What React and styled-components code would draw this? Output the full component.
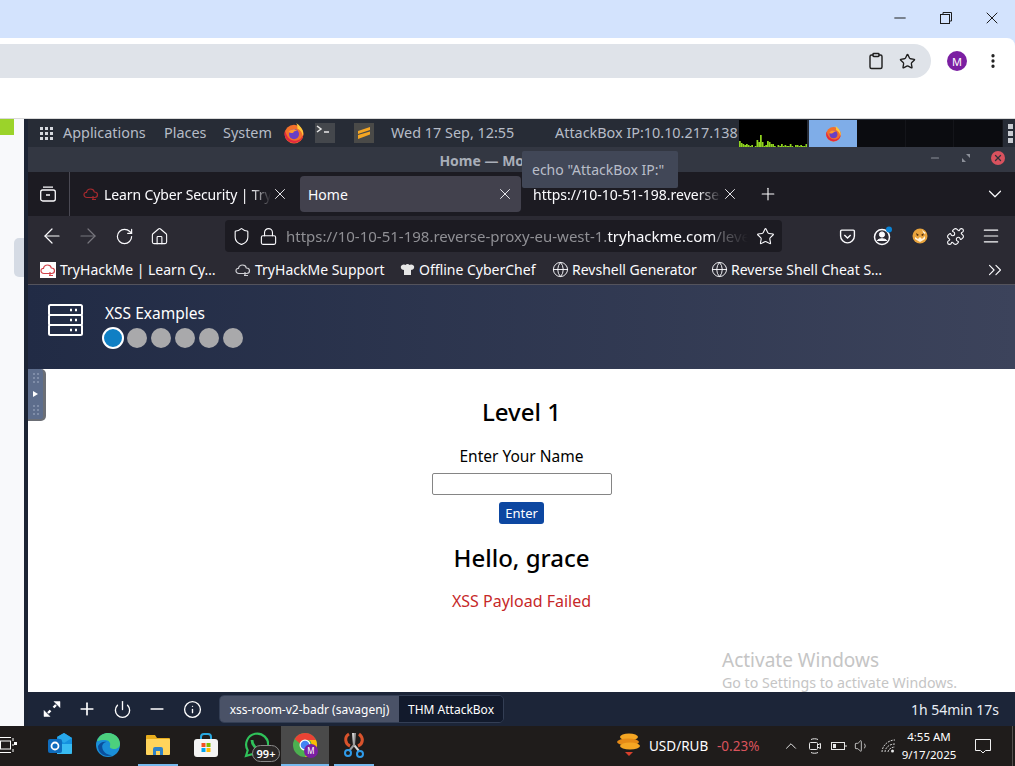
import styled, { createGlobalStyle } from "styled-components"
import {
    ArrowLeft, ArrowRight, RotateCw, Home as HomeIcon, Shield, Lock, Star, Menu, Puzzle, ChevronDown,
    ChevronUp, ChevronsRight, Plus, X, Globe, Power, Minus, Info, Clipboard, MoreVertical, Volume1,
} from "lucide-react"

const Global = createGlobalStyle`
    html, body { margin: 0; padding: 0; background: #fff; overflow: hidden; }
    * { box-sizing: border-box; }
    svg { flex: none; }
    #root { width: 1015px; height: 766px; font-family: "Noto Sans", "Liberation Sans", sans-serif; }
`

const Screen = styled.div`
    position: relative;
    width: 1015px;
    height: 766px;
    display: flex;
    flex-direction: column;
    overflow: hidden;
`

/* outer chrome window */
const ChromeTitle = styled.div`
    height: 38px;
    background: #d3e3fd;
    display: flex;
    justify-content: flex-end;
`
const WinButton = styled.div`
    width: 46px;
    height: 36px;
    display: flex;
    align-items: center;
    justify-content: center;
    color: #1c1c1c;
`
const ChromeBar = styled.div`
    height: 40px;
    background: #d3e3fd;
`
const ChromeBarInner = styled.div`
    height: 40px;
    background: #fff;
    border-top-right-radius: 8px;
    padding-top: 6px;
    display: flex;
    align-items: center;
`
const Omnibox = styled.div`
    width: 931px;
    height: 34px;
    background: #dfe3e9;
    border-radius: 0 17px 17px 0;
    display: flex;
    align-items: center;
    justify-content: flex-end;
    gap: 14px;
    padding-right: 15px;
    color: #1f1f1f;
`
const Avatar = styled.div`
    width: 20px;
    height: 20px;
    margin-left: 16px;
    border-radius: 50%;
    background: #7b1fa2;
    color: #fff;
    font-size: 11px;
    display: flex;
    align-items: center;
    justify-content: center;
`
const Dots = styled.div`
    margin-left: 17px;
    color: #1f1f1f;
    display: flex;
`
const WhiteGap = styled.div`
    height: 41px;
    background: #fff;
    border-bottom: 1px solid #d9d9d9;
`

const Middle = styled.div`
    height: 607px;
    display: flex;
`
const LeftRail = styled.div`
    width: 24px;
    background: #f8f9fb;
    display: flex;
    flex-direction: column;
`
const GreenBlock = styled.div`
    width: 14px;
    height: 16px;
    background: #9bd32a;
`
const RailThumb = styled.div`
    width: 10px;
    height: 39px;
    margin: 103px 0 0 14px;
    background: #d5dbe4;
    border-radius: 5px 0 0 5px;
`
const Remote = styled.div`
    position: relative;
    width: 991px;
    border-left: 4px solid #1c2434;
    display: flex;
    flex-direction: column;
`

/* gnome panel */
const Panel = styled.div`
    height: 28px;
    background: #272c36;
    color: #b6bcc7;
    font-size: 14.4px;
    display: flex;
    align-items: center;
`
const PanelText = styled.span`
    margin-left: ${({ $ml }) => $ml}px;
    width: ${({ $w }) => $w}px;
    white-space: nowrap;
    flex: none;
    line-height: 28px;
`
const AppGrid = styled.div`
    margin-left: 12px;
    width: 13px;
    height: 13px;
    display: grid;
    grid-template-columns: repeat(3, 3px);
    grid-auto-rows: 3px;
    gap: 2px;
    flex: none;
    & > i { background: #d5d8de; }
`
const PanelIcon = styled.div`
    width: 20px;
    height: 20px;
    margin-left: ${({ $ml }) => $ml}px;
    flex: none;
    display: flex;
    align-items: center;
    justify-content: center;
    background: ${({ $bg }) => $bg || "transparent"};
`
const Graph = styled.div`
    width: 68px;
    height: 27px;
    margin: 1px 0 0 2px;
    background: #000;
    flex: none;
`
const ActiveTask = styled.div`
    width: 48px;
    height: 27px;
    margin: 1px 0 0 2px;
    background: #7fade8;
    display: flex;
    align-items: center;
    justify-content: center;
    flex: none;
`
const Workspaces = styled.div`
    width: 146px;
    height: 27px;
    margin-top: 1px;
    background: #0b0c10;
    flex: none;
    display: grid;
    grid-template-columns: repeat(3, 1fr);
    & > i { border-right: 1px solid #14151a; }
`
const Handle = styled.div`
    width: 12px;
    flex: none;
    display: flex;
    flex-direction: column;
    align-items: flex-end;
    justify-content: center;
    gap: 2px;
    padding-right: 2px;
    & > i { display: block; width: 5px; height: 5px; background: #c9ccd2; }
`

/* firefox window */
const FirefoxTitle = styled.div`
    height: 25px;
    padding-top: 2px;
    background: #333742;
    color: #a9aeb8;
    font-size: 14px;
    font-weight: 700;
    display: flex;
    align-items: center;
    justify-content: center;
    position: relative;
`
const WmButtons = styled.div`
    position: absolute;
    right: 10px;
    top: 4px;
    display: flex;
    align-items: center;
    gap: 20px;
`
const WmClose = styled.div`
    width: 14px;
    height: 14px;
    border-radius: 50%;
    background: #d9525e;
    color: #33333a;
    display: flex;
    align-items: center;
    justify-content: center;
`
const TabStrip = styled.div`
    height: 44px;
    background: #1c1b22;
    color: #fbfbfe;
    font-size: 14px;
    display: flex;
    align-items: center;
`
const TabListBtn = styled.div`
    width: 42px;
    height: 44px;
    padding-right: 2px;
    border-right: 1px solid #4a4953;
    display: flex;
    align-items: center;
    justify-content: center;
    margin-right: 1px;
    flex: none;
`
const Tab = styled.div`
    width: ${({ $w }) => $w}px;
    height: 36px;
    padding: 0 ${({ $pr }) => $pr}px 0 ${({ $pl }) => $pl}px;
    display: flex;
    align-items: center;
    border-radius: 4px;
    background: ${({ $active }) => ($active ? "#42414d" : "transparent")};
    flex: none;
`
const TabLabel = styled.span`
    flex: 1;
    min-width: 0;
    margin-left: ${({ $ml }) => $ml || 0}px;
    overflow: hidden;
    white-space: nowrap;
    letter-spacing: ${({ $tight }) => ($tight ? "-0.12px" : "0")};
    -webkit-mask-image: ${({ $fade }) => ($fade ? "linear-gradient(to right, #000 88%, transparent)" : "none")};
`
const NewTab = styled.div`
    margin-left: ${({ $ml }) => $ml}px;
    display: flex;
    flex: none;
`
const NavBar = styled.div`
    height: 36px;
    padding-top: 4px;
    background: #2b2a33;
    color: #fbfbfe;
    display: flex;
    align-items: center;
`
const NavBtn = styled.div`
    width: 18px;
    height: 18px;
    margin-left: ${({ $ml }) => $ml}px;
    display: flex;
    align-items: center;
    justify-content: center;
    flex: none;
    color: ${({ $dim }) => ($dim ? "#77767e" : "inherit")};
`
const UrlBar = styled.div`
    width: 557px;
    height: 32px;
    margin-left: 57px;
    padding: 0 7px;
    background: #1c1b22;
    border-radius: 4px;
    display: flex;
    align-items: center;
    font-size: 15px;
    color: #8f8f94;
    flex: none;
    gap: 8px;
`
const UrlText = styled.div`
    flex: 1;
    min-width: 0;
    white-space: nowrap;
    overflow: hidden;
    -webkit-mask-image: linear-gradient(to right, #000 92%, transparent);
    & > b { font-weight: 400; color: #fbfbfe; }
`
const Bookmarks = styled.div`
    height: 33px;
    padding-top: 3px;
    background: #2b2a33;
    border-bottom: 1px solid #54535c;
    color: #fbfbfe;
    font-size: 14px;
    display: flex;
    align-items: center;
`
const Bookmark = styled.div`
    margin-left: ${({ $ml }) => $ml}px;
    width: ${({ $w }) => $w}px;
    display: flex;
    align-items: center;
    gap: 4px;
    white-space: nowrap;
    flex: none;
`
const Favicon = styled.div`
    width: 16px;
    height: 16px;
    background: ${({ $bg }) => $bg || "transparent"};
    display: flex;
    align-items: center;
    justify-content: center;
    flex: none;
`

/* page */
const PageHeader = styled.div`
    height: 84px;
    background: linear-gradient(to right, #212b45, #3c435b);
    display: flex;
    padding: 18px 0 0 20px;
    color: #fff;
`
const Levels = styled.div`
    margin-left: 21px;
    display: flex;
    flex-direction: column;
`
const HeaderTitle = styled.div`
    font-size: 15.5px;
    line-height: 20px;
    height: 25px;
`
const DotRow = styled.div`
    display: flex;
    gap: 4px;
    margin-left: -2px;
`
const LevelDot = styled.div`
    width: 20px;
    height: 20px;
    border-radius: 50%;
    background: ${({ $active }) => ($active ? "#0f7fc4" : "#a9a9ab")};
    outline: ${({ $active }) => ($active ? "2px solid #fff" : "none")};
    outline-offset: -1px;
`
const Content = styled.div`
    flex: 1;
    background: #fff;
    display: flex;
    flex-direction: column;
    align-items: center;
    color: #000;
`
const Heading = styled.h1`
    margin: ${({ $mt }) => $mt}px 0 0;
    font-size: 24px;
    line-height: 32px;
    font-weight: 500;
`
const NameLabel = styled.label`
    margin-top: 16px;
    font-size: 15.5px;
    line-height: 24px;
`
const NameInput = styled.input`
    width: 180px;
    height: 22px;
    margin-top: 5px;
    border: 1px solid #858585;
    border-radius: 2px;
    background: #fff;
`
const EnterButton = styled.button`
    width: 45px;
    height: 22px;
    margin-top: 7px;
    padding: 0;
    border: none;
    border-radius: 3px;
    background: #0d47a1;
    color: #fff;
    font: 13px "Noto Sans", sans-serif;
`
const Failed = styled.p`
    margin: 15px 0 0;
    font-size: 16px;
    line-height: 24px;
    color: #c62828;
`
const BottomBar = styled.div`
    height: 34px;
    background: #1c2538;
    color: #fff;
    display: flex;
    align-items: center;
`
const BarIcon = styled.div`
    width: 20px;
    height: 20px;
    margin-left: ${({ $ml }) => $ml}px;
    display: flex;
    align-items: center;
    justify-content: center;
    flex: none;
`
const MachineTabs = styled.div`
    width: 285px;
    height: 28px;
    margin-left: 17px;
    border: 1px solid #333e54;
    border-radius: 5px;
    display: flex;
    font-size: 12px;
    overflow: hidden;
    flex: none;
`
const MachineTab = styled.div`
    width: ${({ $w }) => $w}px;
    background: ${({ $active }) => ($active ? "#4a5267" : "#121a2c")};
    display: flex;
    align-items: center;
    justify-content: center;
    white-space: nowrap;
`
const Timer = styled.div`
    margin-left: auto;
    padding-right: 16px;
    font-size: 14px;
    color: #e8edf5;
`

/* overlays */
const Tooltip = styled.div`
    position: absolute;
    left: 494px;
    top: 32px;
    width: 156px;
    height: 37px;
    padding-left: 10px;
    background: #414757;
    border-radius: 2px;
    color: #b9bec9;
    font-size: 14px;
    display: flex;
    align-items: center;
`
const SideHandle = styled.div`
    position: absolute;
    left: 0;
    top: 250px;
    width: 18px;
    height: 52px;
    background: #5d6d8c;
    border-right: 3px solid #6b6e75;
    border-bottom: 2px solid #6b6e75;
    border-radius: 0 5px 5px 0;
    display: flex;
    flex-direction: column;
    align-items: center;
    justify-content: space-between;
    padding: 4px 0;
`
const GripDots = styled.div`
    display: grid;
    grid-template-columns: repeat(2, 2px);
    grid-auto-rows: 2px;
    gap: 2px;
    & > i { background: #7f8da8; }
`
const HandleArrow = styled.div`
    width: 0;
    height: 0;
    border-left: 5px solid #fff;
    border-top: 3px solid transparent;
    border-bottom: 3px solid transparent;
`
const Watermark = styled.div`
    position: absolute;
    left: 694px;
    top: 529px;
    color: #c5c5c5;
    white-space: nowrap;
    pointer-events: none;
`
const WatermarkTitle = styled.div`
    font-size: 19px;
    line-height: 25px;
`
const WatermarkSub = styled.div`
    font-size: 14.2px;
    line-height: 20px;
`

/* windows taskbar */
const Taskbar = styled.div`
    height: 40px;
    background: #1f1c1b;
    color: #fff;
    display: flex;
    align-items: center;
`
const TaskSlot = styled.div`
    position: relative;
    width: ${({ $w }) => $w || 40}px;
    height: 40px;
    margin-left: ${({ $ml }) => $ml || 0}px;
    background: ${({ $active }) => ($active ? "#4a4a4a" : "transparent")};
    border-bottom: 2px solid ${({ $open }) => ($open ? "#76b9ed" : "transparent")};
    display: flex;
    align-items: center;
    justify-content: center;
    flex: none;
`
const Badge = styled.span`
    position: absolute;
    left: 16px;
    top: 19px;
    width: 28px;
    height: 17px;
    border: 1px solid #8a8a8a;
    border-radius: 9px;
    background: #2a2726;
    font-size: 11px;
    line-height: 15px;
    font-weight: 600;
    text-align: center;
`
const Ticker = styled.span`
    font-size: 13.5px;
    margin-left: ${({ $ml }) => $ml}px;
    width: ${({ $w }) => $w}px;
    color: ${({ $red }) => ($red ? "#d9535c" : "#fff")};
    white-space: nowrap;
    flex: none;
`
const Tray = styled.div`
    width: 18px;
    height: 18px;
    margin-left: ${({ $ml }) => $ml}px;
    display: flex;
    align-items: center;
    justify-content: center;
    color: #e6e6e6;
    flex: none;
`
const Clock = styled.div`
    width: 62px;
    margin-left: 1px;
    text-align: center;
    font-size: 11.5px;
    line-height: 18px;
    flex: none;
`
const Divider = styled.div`
    width: 1px;
    height: 40px;
    margin-left: 20px;
    background: #55514f;
    flex: none;
`

function FirefoxLogo({ size = 20 }) {
    return (
        <svg width={size} height={size} viewBox="0 0 20 20">
            <circle cx="10" cy="11" r="8.6" fill="#f3702b" />
            <path d="M2 8c1 5 4 9 9 9 4 0 7-3 7.400-6.500C19 15 15 19 10 19 5 19 1.400 15 1.400 11 1.400 10 1.600 9 2 8z" fill="#e3293f" />
            <path d="M12 1c3 2 6 5 6.400 9 .1 1-.1 2-.4 3-.5-4-3-6-5-7 .5-1.500-.2-3.500-1-5z" fill="#ffc83d" />
            <circle cx="10" cy="11" r="4.600" fill="#6a3fc4" />
            <path d="M5 9c2-3 6-3 8-1-2-.3-3 .5-3.500 1.500C8 10.500 6.500 10 5 9z" fill="#ff9a2e" />
        </svg>
    )
}

function CloudFav({ color }) {
    return (
        <svg width="16" height="16" viewBox="0 0 16 16" fill="none" stroke={color} strokeWidth="1.200">
            <path d="M4 11.500C2 11.500 1 10 1 8.700 1 7.300 2.200 6.200 3.500 6.300 4 4 5.800 3 7.500 3c2 0 3.500 1.300 3.800 3 1.800 0 3.200 1.200 3.200 2.800 0 1.400-1 2.700-2.800 2.700H4z" />
            <path d="M9 13.500h4M10 10v3" />
        </svg>
    )
}

function ServerIcon() {
    return (
        <svg width="36" height="36" viewBox="0 0 36 36" fill="none" stroke="#fff" strokeWidth="2">
            <rect x="1" y="2" width="33" height="10" rx="1.500" />
            <rect x="1" y="12" width="33" height="10" rx="1.500" />
            <rect x="1" y="22" width="33" height="10" rx="1.500" />
            <path d="M22 7h2M27 7h2M22 17h2M27 17h2M22 27h2M27 27h2" strokeWidth="2.500" />
        </svg>
    )
}

function Pocket() {
    return (
        <svg width="17" height="17" viewBox="0 0 16 16" fill="none" stroke="#fbfbfe" strokeWidth="1.300">
            <path d="M2.500 2h11c.7 0 1 .4 1 1v4.500c0 3.500-3 6.500-6.500 6.500S1.500 11 1.500 7.500V3c0-.6.300-1 1-1z" />
            <path d="M5 6.500l3 3 3-3" />
        </svg>
    )
}

function Account() {
    return (
        <svg width="20" height="20" viewBox="0 0 20 20" fill="none" stroke="#fbfbfe">
            <circle cx="9" cy="11" r="7.500" strokeWidth="1.500" />
            <circle cx="9" cy="8.500" r="2.600" fill="#fbfbfe" />
            <path d="M4 15c1-3 9-3 10 0" fill="#fbfbfe" />
            <circle cx="16" cy="3.500" r="3" fill="#0a84d6" stroke="none" />
        </svg>
    )
}

function FoxAddon() {
    return (
        <svg width="16" height="16" viewBox="0 0 16 16">
            <circle cx="8" cy="8" r="7.500" fill="#e8a33d" />
            <path d="M3 9l3 2 2-2 2 2 3-3v3l-5 3-5-3z" fill="#fff3dc" />
            <path d="M4 5l3 2-2 1zM12 5L9 7l2 1z" fill="#4a2a10" />
            <path d="M10 2l4 3-2 1z" fill="#fff3dc" />
        </svg>
    )
}

function ExpandArrows() {
    return (
        <svg width="18" height="18" viewBox="0 0 18 18" fill="#fff" stroke="#fff">
            <path d="M11 1.500h6v6z" strokeWidth=".5" />
            <path d="M1 10.500v6h6z" strokeWidth=".5" />
            <path d="M13 5l-2.500 2.500M5 13l2.500-2.500" strokeWidth="2.400" />
        </svg>
    )
}

function Outlook() {
    return (
        <svg width="25" height="24" viewBox="0 0 25 24">
            <path d="M9 4l7-4 8 5v14a2 2 0 0 1-2 2H9z" fill="#1490df" />
            <path d="M9 4l7-4 8 5-8 5z" fill="#28a8ea" />
            <path d="M9 11h15v10H9z" fill="#50d9ff" opacity=".6" />
            <rect x="0" y="6" width="14" height="14" rx="2" fill="#0f6cbd" />
            <circle cx="7" cy="13" r="3.500" fill="none" stroke="#fff" strokeWidth="1.800" />
        </svg>
    )
}

function Edge() {
    return (
        <svg width="24" height="24" viewBox="0 0 24 24">
            <circle cx="12" cy="12" r="12" fill="#1a8fd8" />
            <path d="M1 8C3 2 8 0 12 0c7 0 12 5 12 11 0 3-3 5-6 5-2 0-5-1-4-3 1-3-1-6-5-6-3 0-6 .5-8 1z" fill="#4cd07d" />
            <path d="M11 9c-4 0-6 4-4 8 1.500 3 5 5 9 5-6 3-14-1-14-9 2-4 6-5 9-4z" fill="#0b4f9c" />
        </svg>
    )
}

function Folder() {
    return (
        <svg width="24" height="22" viewBox="0 0 24 22">
            <path d="M0 2a1 1 0 0 1 1-1h8l2 3h12a1 1 0 0 1 1 1v3H0z" fill="#e8ad1d" />
            <rect x="0" y="5" width="24" height="16" rx="1" fill="#ffd45c" />
            <path d="M7 21v-6a2 2 0 0 1 2-2h6a2 2 0 0 1 2 2v6h-3v-4h-4v4z" fill="#2f82c8" />
        </svg>
    )
}

function Store() {
    return (
        <svg width="24" height="24" viewBox="0 0 24 24">
            <path d="M7 7V4a3 3 0 0 1 3-3h4a3 3 0 0 1 3 3v3" fill="none" stroke="#28a8e0" strokeWidth="2" />
            <rect x="0" y="6" width="24" height="18" rx="3" fill="#f4f4f4" />
            <rect x="7.500" y="10" width="4" height="4" fill="#f25022" />
            <rect x="12.500" y="10" width="4" height="4" fill="#7fba00" />
            <rect x="7.500" y="15" width="4" height="4" fill="#00a4ef" />
            <rect x="12.500" y="15" width="4" height="4" fill="#ffb900" />
        </svg>
    )
}

function WhatsApp() {
    return (
        <svg width="26" height="26" viewBox="0 0 26 26" fill="none" stroke="#2fc25a" strokeWidth="2.200">
            <path d="M3 24l1.700-5.800A11 11 0 1 1 9 22.300z" />
            <path d="M9 8c0 5 4 9 8 9" strokeWidth="2.800" />
        </svg>
    )
}

function ChromeLogo() {
    return (
        <svg width="26" height="26" viewBox="0 0 26 26">
            <circle cx="13" cy="13" r="12" fill="#4caf50" />
            <path d="M2.600 7A12 12 0 0 1 24 8H13a5 5 0 0 0-5 3.500z" fill="#ea4335" />
            <path d="M24 8a12 12 0 0 1-11 17l5-9a5 5 0 0 0-1-8z" fill="#fbbc04" />
            <circle cx="13" cy="13" r="5.500" fill="#fff" />
            <circle cx="13" cy="13" r="4.300" fill="#4285f4" />
            <circle cx="19" cy="19" r="7" fill="#7b1fa2" />
            <text x="19" y="22" fontSize="8" fill="#fff" textAnchor="middle" fontFamily="Noto Sans">M</text>
        </svg>
    )
}

function Snip() {
    return (
        <svg width="22" height="26" viewBox="0 0 22 26" fill="none">
            <path d="M6 2C1 5 2 12 7 14M16 2c5 4 4 10-1 12" stroke="#d9532c" strokeWidth="3" />
            <path d="M10 1l1 12 5 6" stroke="#d8d8d8" strokeWidth="2" />
            <path d="M12 1l-1 12-5 6" stroke="#9a9a9a" strokeWidth="2" />
            <circle cx="5" cy="21" r="3" stroke="#2f9bea" strokeWidth="2" />
            <circle cx="17" cy="22" r="3" stroke="#2f9bea" strokeWidth="2" />
        </svg>
    )
}

function TaskView() {
    return (
        <svg width="18" height="16" viewBox="0 0 18 16" fill="none" stroke="#fff" strokeWidth="1">
            <path d="M0 .5h11M0 15.500h11" />
            <rect x=".5" y="4" width="10" height="8" />
            <path d="M13 1v3M13 7v2M13 12v3" />
            <rect x="14" y="5" width="3" height="3" fill="#fff" stroke="none" />
        </svg>
    )
}

function Coin() {
    return (
        <svg width="24" height="24" viewBox="0 0 24 24">
            <ellipse cx="12" cy="4" rx="9" ry="3.500" fill="#f5a623" />
            <ellipse cx="11" cy="9" rx="11" ry="3.500" fill="#e58a16" />
            <ellipse cx="13" cy="13" rx="10" ry="3.500" fill="#f5a623" />
            <path d="M8 19l4 4 4-4z" fill="#d9402c" />
        </svg>
    )
}

function Camera() {
    return (
        <svg width="18" height="18" viewBox="0 0 18 18" fill="none" stroke="#e6e6e6">
            <rect x="3.500" y="5.500" width="8" height="7" rx="1" />
            <path d="M11.500 8l3-1.500v5l-3-1.500M5 2.500c2-1 5-1 7 0M5 15.500c2 1 5 1 7 0" />
        </svg>
    )
}

function Battery() {
    return (
        <svg width="18" height="18" viewBox="0 0 18 18" fill="none" stroke="#e6e6e6">
            <rect x="1.500" y="5.500" width="13" height="7" />
            <rect x="3" y="7" width="3" height="4" fill="#e6e6e6" stroke="none" />
            <path d="M16 8v2" />
        </svg>
    )
}

function WifiOff() {
    return (
        <svg width="18" height="18" viewBox="0 0 18 18" fill="none" stroke="#d0d0d0">
            <path d="M3 15C3 9 9 3 16 3M6 15c0-4 4-8 10-8M9 15c0-2 3-5 7-5" strokeDasharray="2 1" />
            <circle cx="13.500" cy="14" r="1.500" fill="#e6e6e6" stroke="none" />
        </svg>
    )
}

function Notification() {
    return (
        <svg width="18" height="18" viewBox="0 0 18 18" fill="none" stroke="#f0f0f0">
            <path d="M1.500 2.500h15v11h-5l-2.500 2.500-2.500-2.500h-5z" />
        </svg>
    )
}

function SparkBars() {
    const heights = [6, 4, 3, 2, 3, 2, 1, 2, 0, 1, 7, 5, 12, 5, 1, 2, 6, 5, 3, 3, 1, 0, 2, 1, 3, 1, 2, 1, 1, 3, 1, 0, 2, 2, 1, 2, 1, 1, 3]
    return (
        <svg width="68" height="27" viewBox="0 0 68 27" fill="#8fd41f">
            {heights.map((h, i) => (
                <rect key={i} x={i * 1.75} y={27 - h} width="1.750" height={h} />
            ))}
        </svg>
    )
}

const gridCells = Array.from({ length: 9 })
const gripCells = Array.from({ length: 6 })

export default function App() {
    return (
        <Screen>
            <Global />
            <ChromeTitle>
                <WinButton><Minus size={18} strokeWidth={1.300} /></WinButton>
                <WinButton>
                    <svg width="12" height="12" viewBox="0 0 12 12" fill="none" stroke="#1c1c1c">
                        <rect x=".5" y="2.500" width="9" height="9" />
                        <path d="M3 2.500V.5h8.500V9H9.500" />
                    </svg>
                </WinButton>
                <WinButton><X size={20} strokeWidth={1.200} /></WinButton>
            </ChromeTitle>
            <ChromeBar>
                <ChromeBarInner>
                    <Omnibox>
                        <Clipboard size={18} strokeWidth={1.900} />
                        <Star size={17} strokeWidth={1.900} />
                    </Omnibox>
                    <Avatar>M</Avatar>
                    <Dots><MoreVertical size={18} strokeWidth={2.400} /></Dots>
                </ChromeBarInner>
            </ChromeBar>
            <WhiteGap />
            <Middle>
                <LeftRail>
                    <GreenBlock />
                    <RailThumb />
                </LeftRail>
                <Remote>
                    <Panel>
                        <AppGrid>{gridCells.map((_, i) => <i key={i} />)}</AppGrid>
                        <PanelText $ml={10} $w={84}>Applications</PanelText>
                        <PanelText $ml={17} $w={42}>Places</PanelText>
                        <PanelText $ml={17} $w={48}>System</PanelText>
                        <PanelIcon $ml={13}><FirefoxLogo size={22} /></PanelIcon>
                        <PanelIcon $ml={11} $bg="#44474c">
                            <svg width="20" height="20" viewBox="0 0 20 20" fill="none" stroke="#e8e8e8" strokeWidth="1.500">
                                <path d="M2 3l4 3-4 3M9 9h5" />
                            </svg>
                        </PanelIcon>
                        <PanelIcon $ml={19} $bg="#4a4a48">
                            <svg width="14" height="14" viewBox="0 0 14 14" fill="#f5a623">
                                <path d="M1 5l12-4v3L1 8zM1 9l12-3.500v3L1 13z" />
                            </svg>
                        </PanelIcon>
                        <PanelText $ml={17} $w={120}>Wed 17 Sep, 12:55</PanelText>
                        <PanelText $ml={44} $w={182}>AttackBox IP:10.10.217.138</PanelText>
                        <Graph><SparkBars /></Graph>
                        <ActiveTask><FirefoxLogo size={17} /></ActiveTask>
                        <Workspaces><i /><i /><i /></Workspaces>
                        <Handle><i /><i /><i /></Handle>
                    </Panel>
                    <FirefoxTitle>
                        Home — Mozilla Firefox
                        <WmButtons>
                            <Minus size={12} strokeWidth={2.400} color="#8b8f98" />
                            <svg width="10" height="10" viewBox="0 0 10 10" fill="#8b8f98">
                                <path d="M5 1h4v4zM1 5l4 4H1z" />
                            </svg>
                            <WmClose><X size={10} strokeWidth={3} /></WmClose>
                        </WmButtons>
                    </FirefoxTitle>
                    <TabStrip>
                        <TabListBtn>
                            <svg width="16" height="16" viewBox="0 0 16 16" fill="none" stroke="#fbfbfe" strokeWidth="1.300">
                                <rect x=".7" y="4" width="14.600" height="11" rx="2" />
                                <path d="M3 1.200h10M6 9h4" />
                            </svg>
                        </TabListBtn>
                        <Tab $w={229} $pl={12} $pr={11}>
                            <Favicon><CloudFav color="#a52a2e" /></Favicon>
                            <TabLabel $fade $tight $ml={5}>Learn Cyber Security | TryHackMe</TabLabel>
                            <X size={18} strokeWidth={1.200} />
                        </Tab>
                        <Tab $w={221} $pl={8} $pr={7} $active>
                            <TabLabel>Home</TabLabel>
                            <X size={18} strokeWidth={1.200} />
                        </Tab>
                        <Tab $w={224} $pl={12} $pr={6}>
                            <TabLabel $fade>https://10-10-51-198.reverse-proxy-eu-west-1</TabLabel>
                            <X size={18} strokeWidth={1.200} />
                        </Tab>
                        <NewTab $ml={13}><Plus size={20} strokeWidth={1.300} /></NewTab>
                        <NewTab $ml={206}><ChevronDown size={22} strokeWidth={1.300} /></NewTab>
                    </TabStrip>
                    <NavBar>
                        <NavBtn $ml={15}><ArrowLeft size={24} strokeWidth={1.200} /></NavBtn>
                        <NavBtn $ml={18} $dim><ArrowRight size={24} strokeWidth={1.200} /></NavBtn>
                        <NavBtn $ml={18}><RotateCw size={19} strokeWidth={1.500} /></NavBtn>
                        <NavBtn $ml={17}><HomeIcon size={19} strokeWidth={1.400} /></NavBtn>
                        <UrlBar>
                            <Shield size={19} strokeWidth={1.400} color="#fbfbfe" />
                            <Lock size={19} strokeWidth={1.400} color="#fbfbfe" />
                            <UrlText>https://10-10-51-198.reverse-proxy-eu-west-1.<b>tryhackme.com</b>/levels/1</UrlText>
                            <Star size={19} strokeWidth={1.400} color="#fbfbfe" />
                        </UrlBar>
                        <NavBtn $ml={56}><Pocket /></NavBtn>
                        <NavBtn $ml={18}><Account /></NavBtn>
                        <NavBtn $ml={19}><FoxAddon /></NavBtn>
                        <NavBtn $ml={17}><Puzzle size={19} strokeWidth={1.400} /></NavBtn>
                        <NavBtn $ml={18}><Menu size={20} strokeWidth={1.400} /></NavBtn>
                    </NavBar>
                    <Bookmarks>
                        <Bookmark $ml={12} $w={177}>
                            <Favicon $bg="#fff"><CloudFav color="#d1434b" /></Favicon>
                            TryHackMe | Learn Cy…
                        </Bookmark>
                        <Bookmark $ml={18} $w={151}>
                            <Favicon><CloudFav color="#cfcfd4" /></Favicon>
                            TryHackMe Support
                        </Bookmark>
                        <Bookmark $ml={13} $w={140}>
                            <Favicon>
                                <svg width="15" height="15" viewBox="0 0 15 15" fill="#e6e6e6">
                                    <path d="M4 13V8C1 8 0 5 1.500 3.500 3 2 5 2.500 5.500 3c1-1.500 3-1.500 4 0 .5-.5 2.500-1 4 .5S14 8 11 8v5z" />
                                </svg>
                            </Favicon>
                            Offline CyberChef
                        </Bookmark>
                        <Bookmark $ml={13} $w={146}>
                            <Favicon><Globe size={17} strokeWidth={1.300} /></Favicon>
                            Revshell Generator
                        </Bookmark>
                        <Bookmark $ml={13} $w={176}>
                            <Favicon><Globe size={17} strokeWidth={1.300} /></Favicon>
                            Reverse Shell Cheat S…
                        </Bookmark>
                        <NewTab $ml={97}><ChevronsRight size={22} strokeWidth={1.200} /></NewTab>
                    </Bookmarks>
                    <PageHeader>
                        <ServerIcon />
                        <Levels>
                            <HeaderTitle>XSS Examples</HeaderTitle>
                            <DotRow>
                                <LevelDot $active />
                                <LevelDot />
                                <LevelDot />
                                <LevelDot />
                                <LevelDot />
                                <LevelDot />
                            </DotRow>
                        </Levels>
                    </PageHeader>
                    <Content>
                        <Heading $mt={27}>Level 1</Heading>
                        <NameLabel>Enter Your Name</NameLabel>
                        <NameInput />
                        <EnterButton>Enter</EnterButton>
                        <Heading $mt={18}>Hello, grace</Heading>
                        <Failed>XSS Payload Failed</Failed>
                    </Content>
                    <BottomBar>
                        <BarIcon $ml={14}><ExpandArrows /></BarIcon>
                        <BarIcon $ml={15}><Plus size={20} strokeWidth={2} /></BarIcon>
                        <BarIcon $ml={15}><Power size={19} strokeWidth={1.700} /></BarIcon>
                        <BarIcon $ml={15}><Minus size={20} strokeWidth={2} /></BarIcon>
                        <BarIcon $ml={15}><Info size={19} strokeWidth={1.700} /></BarIcon>
                        <MachineTabs>
                            <MachineTab $w={179} $active>xss-room-v2-badr (savagenj)</MachineTab>
                            <MachineTab $w={104}>THM AttackBox</MachineTab>
                        </MachineTabs>
                        <Timer>1h 54min 17s</Timer>
                    </BottomBar>
                    <Tooltip>echo "AttackBox IP:"</Tooltip>
                    <SideHandle>
                        <GripDots>{gripCells.map((_, i) => <i key={i} />)}</GripDots>
                        <HandleArrow />
                        <GripDots>{gripCells.map((_, i) => <i key={i} />)}</GripDots>
                    </SideHandle>
                    <Watermark>
                        <WatermarkTitle>Activate Windows</WatermarkTitle>
                        <WatermarkSub>Go to Settings to activate Windows.</WatermarkSub>
                    </Watermark>
                </Remote>
            </Middle>
            <Taskbar>
                <TaskSlot $w={17}><TaskView /></TaskSlot>
                <TaskSlot $ml={23}><Outlook /></TaskSlot>
                <TaskSlot $ml={8}><Edge /></TaskSlot>
                <TaskSlot $ml={10} $open><Folder /></TaskSlot>
                <TaskSlot $ml={8}><Store /></TaskSlot>
                <TaskSlot $ml={10}><WhatsApp /><Badge>99+</Badge></TaskSlot>
                <TaskSlot $ml={5} $w={48} $active $open><ChromeLogo /></TaskSlot>
                <TaskSlot $ml={5} $open><Snip /></TaskSlot>
                <TaskSlot $ml={243} $w={24}><Coin /></TaskSlot>
                <Ticker $ml={8} $w={58}>USD/RUB</Ticker>
                <Ticker $ml={10} $w={41} $red>-0.23%</Ticker>
                <Tray $ml={24}><ChevronUp size={18} strokeWidth={1.300} /></Tray>
                <Tray $ml={6}><Camera /></Tray>
                <Tray $ml={6}><Battery /></Tray>
                <Tray $ml={5}><Volume1 size={16} strokeWidth={1.200} /></Tray>
                <Tray $ml={8}><WifiOff /></Tray>
                <Clock>4:55 AM<br />9/17/2025</Clock>
                <Tray $ml={14}><Notification /></Tray>
                <Divider />
            </Taskbar>
        </Screen>
    )
}
